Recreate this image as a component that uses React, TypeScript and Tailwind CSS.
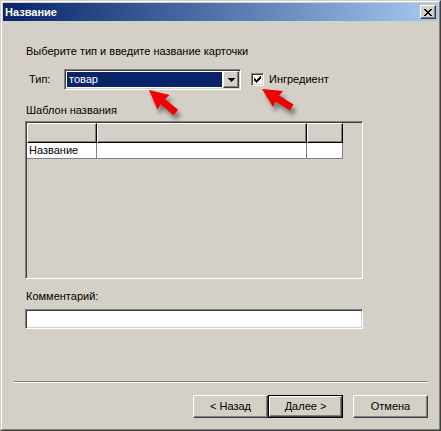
import React from "react";

const raised =
  "border border-t-white border-l-white border-r-[#404040] border-b-[#404040] shadow-[inset_-1px_-1px_0_#808080]";
const sunken =
  "border border-t-[#808080] border-l-[#808080] border-r-white border-b-white shadow-[inset_1px_1px_0_#404040,inset_-1px_-1px_0_#d4d0c8]";

function CloseGlyph() {
  const px: [number, number][] = [
    [0, 0], [1, 0], [6, 0], [7, 0],
    [1, 1], [2, 1], [5, 1], [6, 1],
    [2, 2], [3, 2], [4, 2], [5, 2],
    [3, 3], [4, 3],
    [2, 4], [3, 4], [4, 4], [5, 4],
    [1, 5], [2, 5], [5, 5], [6, 5],
    [0, 6], [1, 6], [6, 6], [7, 6],
  ];
  return (
    <svg width="8" height="7" viewBox="0 0 8 7" shapeRendering="crispEdges">
      {px.map(([x, y]) => (
        <rect key={`${x}-${y}`} x={x} y={y} width="1" height="1" fill="#000" />
      ))}
    </svg>
  );
}

function CheckGlyph() {
  const px: [number, number][] = [
    [6, 0],
    [5, 1], [6, 1],
    [0, 2], [4, 2], [5, 2], [6, 2],
    [0, 3], [1, 3], [3, 3], [4, 3], [5, 3],
    [0, 4], [1, 4], [2, 4], [3, 4], [4, 4],
    [1, 5], [2, 5], [3, 5],
    [2, 6],
  ];
  return (
    <svg width="7" height="7" viewBox="0 0 7 7" shapeRendering="crispEdges">
      {px.map(([x, y]) => (
        <rect key={`${x}-${y}`} x={x} y={y} width="1" height="1" fill="#000" />
      ))}
    </svg>
  );
}

function DownTriangle() {
  return (
    <svg width="7" height="4" viewBox="0 0 7 4" shapeRendering="crispEdges">
      <rect x="0" y="0" width="7" height="1" fill="#000" />
      <rect x="1" y="1" width="5" height="1" fill="#000" />
      <rect x="2" y="2" width="3" height="1" fill="#000" />
      <rect x="3" y="3" width="1" height="1" fill="#000" />
    </svg>
  );
}

function Button({ label, isDefault }: { label: string; isDefault?: boolean }) {
  if (isDefault) {
    return (
      <div className="w-[75px] h-[23px] border border-black">
        <div className={`w-full h-full ${raised} flex items-center justify-center`}>
          {label}
        </div>
      </div>
    );
  }
  return (
    <div className={`w-[75px] h-[23px] ${raised} flex items-center justify-center`}>
      {label}
    </div>
  );
}

const ARROW = "0,0 19,-9.5 18,-3.5 35,-3.5 35,3.5 18,3.5 19,9.5";

function Arrows() {
  const arrows = [
    { x: 148, y: 89, a: 40 },
    { x: 261, y: 88, a: 32 },
  ];
  return (
    <svg
      className="absolute inset-0 pointer-events-none"
      width="441"
      height="431"
      viewBox="0 0 441 431"
    >
      <defs>
        <filter id="soft" x="-50%" y="-50%" width="200%" height="200%">
          <feGaussianBlur stdDeviation="2" />
        </filter>
      </defs>
      {arrows.map((ar, i) => (
        <g key={i}>
          <g transform={`translate(${ar.x + 3} ${ar.y + 5}) rotate(${ar.a})`}>
            <polygon points={ARROW} fill="#3a3a3a" opacity="0.55" filter="url(#soft)" />
          </g>
          <g transform={`translate(${ar.x} ${ar.y}) rotate(${ar.a})`}>
            <polygon points={ARROW} fill="#f40000" />
          </g>
        </g>
      ))}
    </svg>
  );
}

export default function App() {
  return (
    <div className="relative w-[441px] h-[431px] bg-[#d4d0c8] text-black text-[11px] leading-[13px] font-['Liberation_Sans',Arial,sans-serif] border border-t-[#d4d0c8] border-l-[#d4d0c8] border-r-[#404040] border-b-[#404040]">
      <div className="w-full h-full border border-t-white border-l-white border-r-[#808080] border-b-[#808080] p-px flex flex-col">
        {/* caption */}
        <div className="h-[18px] bg-linear-to-r from-[#0a246a] to-[#a6caf0] flex items-center justify-between pl-[2px] pr-[2px]">
          <span className="text-white font-bold text-[11px] leading-[13px]">Название</span>
          <div className={`w-[16px] h-[14px] bg-[#d4d0c8] ${raised} flex items-center justify-center`}>
            <CloseGlyph />
          </div>
        </div>

        {/* client area */}
        <div className="flex-1 flex flex-col">
          <div className="flex flex-col pl-[22px]">
            <div className="mt-[24px] h-[13px] pl-px">Выберите тип и введите название карточки</div>

            <div className="mt-[11px] h-[21px] flex items-center pl-[3px]">
              <span className="w-[36px] pl-px">Тип:</span>
              <div className={`w-[177px] h-[21px] ${sunken} p-px flex bg-white`}>
                <div className="flex-1 p-px">
                  <div className="h-full bg-[#0a246a] text-white pl-[2px] flex items-center">товар</div>
                </div>
                <div className={`w-[16px] h-[17px] bg-[#d4d0c8] ${raised} flex items-center justify-center`}>
                  <DownTriangle />
                </div>
              </div>
              <div className={`ml-[10px] w-[13px] h-[13px] ${sunken} bg-white flex items-center justify-center`}>
                <CheckGlyph />
              </div>
              <span className="ml-[5px]">Ингредиент</span>
            </div>

            <div className="mt-[14px] h-[13px] pl-px">Шаблон названия</div>

            <div className={`mt-[4px] w-[338px] h-[158px] ${sunken} p-px`}>
              <div className="flex h-[20px]">
                <div className="w-[70px] border border-t-white border-l-white border-r-black border-b-black shadow-[inset_-1px_-1px_0_#808080]" />
                <div className="w-[210px] border border-t-white border-l-white border-r-black border-b-black shadow-[inset_-1px_-1px_0_#808080]" />
                <div className="w-[36px] border border-t-white border-l-white border-r-black border-b-black shadow-[inset_-1px_-1px_0_#808080]" />
              </div>
              <div className="flex h-[16px]">
                <div className="w-[70px] bg-white border-r border-b border-[#808080] pl-[2px] flex items-center">
                  Название
                </div>
                <div className="w-[210px] bg-white border-r border-b border-[#808080]" />
                <div className="w-[36px] bg-white border-r border-b border-[#808080]" />
              </div>
            </div>

            <div className="mt-[11px] h-[13px] pl-px">Комментарий:</div>

            <div className={`mt-[6px] w-[338px] h-[20px] ${sunken} bg-white`} />
          </div>

          {/* divider */}
          <div className="mt-[52px] ml-[11px] w-[414px] border-t border-t-[#808080] border-b border-b-white" />

          <div className="mt-[12px] flex justify-end pr-[10px]">
            <Button label="< Назад" />
            <Button label="Далее >" isDefault />
            <div className="w-[10px]" />
            <Button label="Отмена" />
          </div>
        </div>
      </div>
      <Arrows />
    </div>
  );
}
